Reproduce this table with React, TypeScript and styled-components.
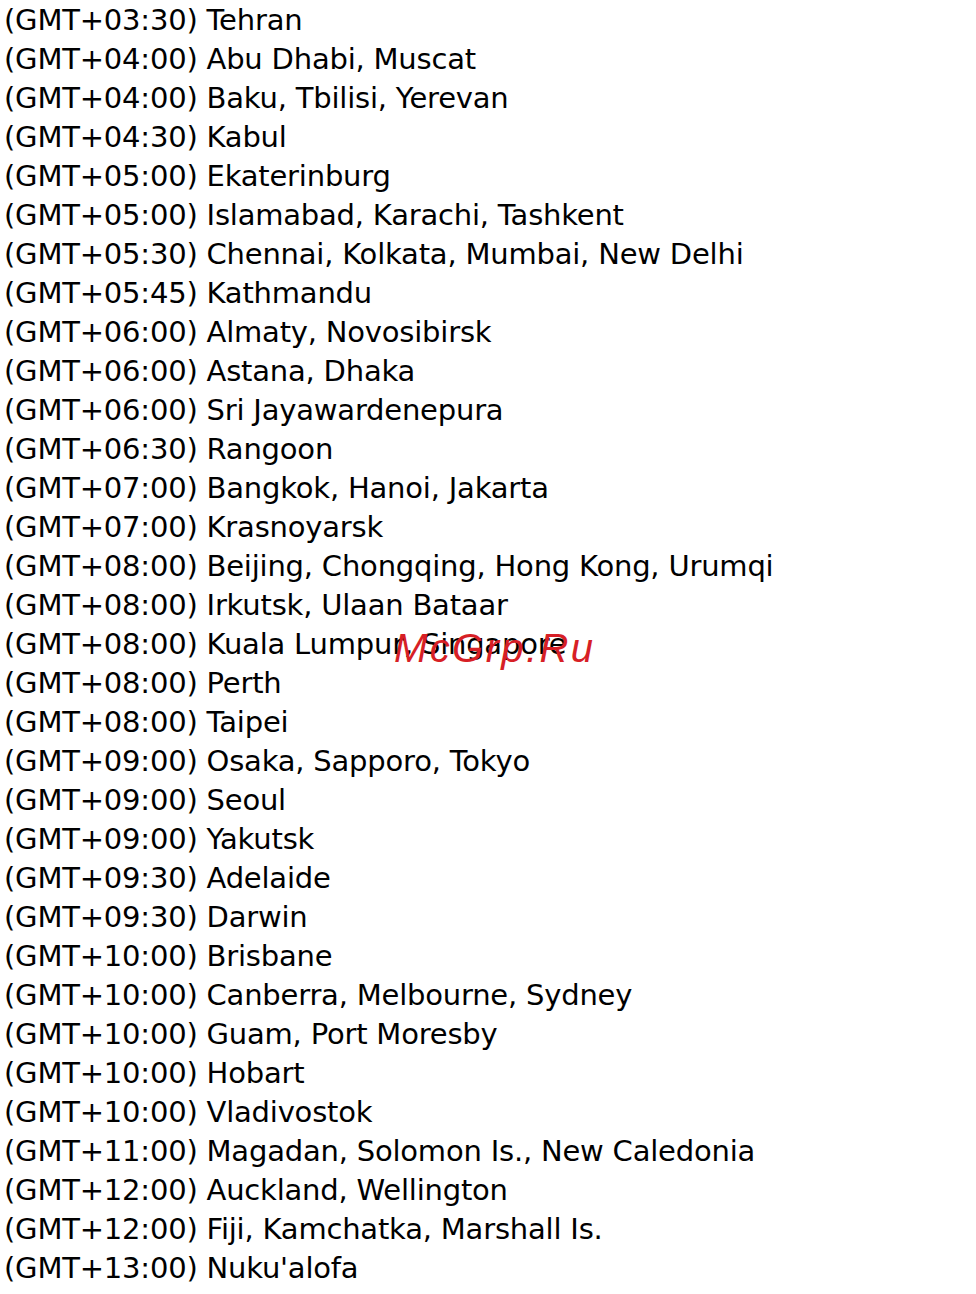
import React from "react";
import styled, { createGlobalStyle } from "styled-components";

const Global = createGlobalStyle`
  html, body { margin: 0; padding: 0; background: #ffffff; }
`;

const Page = styled.div`
  position: relative;
  width: 976px;
  height: 1294px;
  overflow: hidden;
  background: #fff;
`;

const List = styled.ul`
  list-style: none;
  margin: 0;
  padding: 1px 0 0 4px;
  display: flex;
  flex-direction: column;
`;

const Row = styled.li`
  font-family: "DejaVu Sans", Verdana, sans-serif;
  font-size: 29px;
  line-height: 39px;
  height: 39px;
  color: #000;
  white-space: nowrap;
  letter-spacing: -0.2px;
`;

const Watermark = styled.div`
  position: absolute;
  left: 394px;
  top: 622px;
  font-family: "Liberation Sans", Arial, sans-serif;
  font-style: italic;
  font-size: 40px;
  color: #d71f26;
  letter-spacing: 2.4px;
  line-height: 52px;
`;

const zones: string[] = [
  "(GMT+03:30) Tehran",
  "(GMT+04:00) Abu Dhabi, Muscat",
  "(GMT+04:00) Baku, Tbilisi, Yerevan",
  "(GMT+04:30) Kabul",
  "(GMT+05:00) Ekaterinburg",
  "(GMT+05:00) Islamabad, Karachi, Tashkent",
  "(GMT+05:30) Chennai, Kolkata, Mumbai, New Delhi",
  "(GMT+05:45) Kathmandu",
  "(GMT+06:00) Almaty, Novosibirsk",
  "(GMT+06:00) Astana, Dhaka",
  "(GMT+06:00) Sri Jayawardenepura",
  "(GMT+06:30) Rangoon",
  "(GMT+07:00) Bangkok, Hanoi, Jakarta",
  "(GMT+07:00) Krasnoyarsk",
  "(GMT+08:00) Beijing, Chongqing, Hong Kong, Urumqi",
  "(GMT+08:00) Irkutsk, Ulaan Bataar",
  "(GMT+08:00) Kuala Lumpur, Singapore",
  "(GMT+08:00) Perth",
  "(GMT+08:00) Taipei",
  "(GMT+09:00) Osaka, Sapporo, Tokyo",
  "(GMT+09:00) Seoul",
  "(GMT+09:00) Yakutsk",
  "(GMT+09:30) Adelaide",
  "(GMT+09:30) Darwin",
  "(GMT+10:00) Brisbane",
  "(GMT+10:00) Canberra, Melbourne, Sydney",
  "(GMT+10:00) Guam, Port Moresby",
  "(GMT+10:00) Hobart",
  "(GMT+10:00) Vladivostok",
  "(GMT+11:00) Magadan, Solomon Is., New Caledonia",
  "(GMT+12:00) Auckland, Wellington",
  "(GMT+12:00) Fiji, Kamchatka, Marshall Is.",
  "(GMT+13:00) Nuku'alofa",
];

export default function App() {
  return (
    <Page>
      <Global />
      <List>
        {zones.map((z, i) => (
          <Row key={i}>{z}</Row>
        ))}
      </List>
      <Watermark>McGrp.Ru</Watermark>
    </Page>
  );
}
